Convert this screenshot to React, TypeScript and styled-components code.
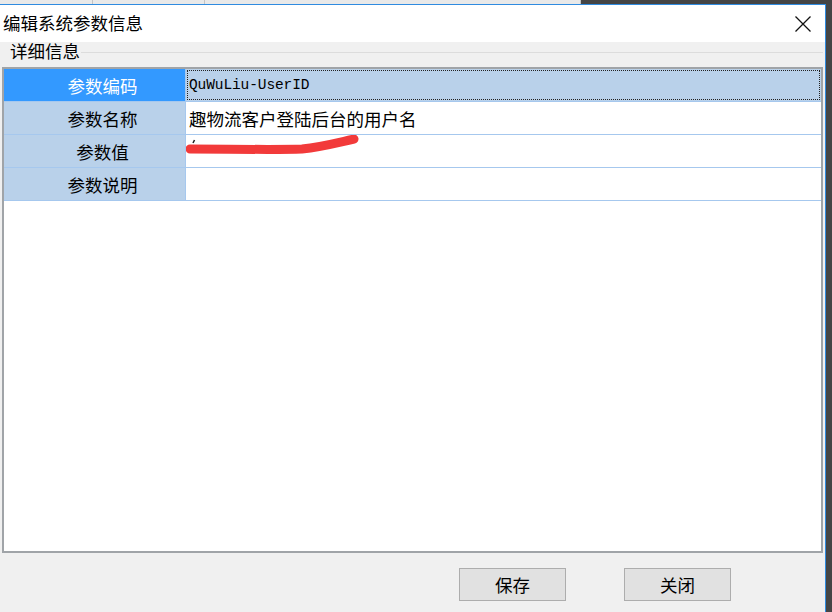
import React from "react";
import styled, { createGlobalStyle } from "styled-components";

const GlobalStyle = createGlobalStyle`
  html, body { margin: 0; padding: 0; background: #454545; }
  body { font-family: "Noto Sans CJK SC", "Noto Sans", sans-serif; }
  * { box-sizing: border-box; }
`;

const Screen = styled.div`
  width: 832px;
  height: 612px;
  overflow: hidden;
  background: #454545;
  display: flex;
  flex-direction: column;
`;

const TaskStrip = styled.div`
  height: 4px;
  display: flex;
  flex: none;
`;

const TaskTab = styled.div<{ $w: number }>`
  width: ${(p) => p.$w}px;
  height: 4px;
  background: #e9e9e9;
  border-right: 1px solid #c4c4c4;
`;

const WindowRow = styled.div`
  flex: 1;
  display: flex;
`;

const Dialog = styled.div`
  width: 826px;
  height: 608px;
  border-top: 1px solid #2f8be0;
  border-right: 1px solid #2f8be0;
  background: #f0f0f0;
  display: flex;
  flex-direction: column;
`;

const TitleBar = styled.div`
  height: 37px;
  flex: none;
  background: #ffffff;
  display: flex;
  align-items: center;
  padding-left: 3px;
`;

const Title = styled.div`
  flex: 1;
  font-size: 17.5px;
  color: #000;
  line-height: 20px;
  margin-top: -1px;
`;

const CloseButton = styled.div`
  width: 44px;
  height: 37px;
  display: flex;
  align-items: center;
  justify-content: center;
`;

const GroupHeader = styled.div`
  height: 25px;
  flex: none;
  display: flex;
  align-items: flex-start;
`;

const GroupInner = styled.div`
  height: 20px;
  flex: 1;
  display: flex;
  align-items: center;
  padding-left: 10px;
  padding-right: 2px;
`;

const GroupLabel = styled.div`
  font-size: 17.5px;
  line-height: 20px;
  color: #000;
  margin-top: -2px;
`;

const GroupLine = styled.div`
  flex: 1;
  height: 1px;
  background: #dcdcdc;
  margin-left: 1px;
  margin-top: 1px;
`;

const Grid = styled.div`
  margin: 0 2px;
  height: 486px;
  flex: none;
  border: 2px solid #a0a4a8;
  background: #ffffff;
  display: flex;
  flex-direction: column;
`;

const Row = styled.div`
  display: grid;
  grid-template-columns: 182px 1fr;
  height: 33px;
  border-bottom: 1px solid #a6c8ee;
`;

const HeaderCell = styled.div<{ $selected?: boolean }>`
  background: ${(p) => (p.$selected ? "#3399ff" : "#b9d1ea")};
  color: ${(p) => (p.$selected ? "#ffffff" : "#000000")};
  border-right: 1px solid #a6c8ee;
  font-size: 17.5px;
  display: flex;
  align-items: center;
  justify-content: center;
  padding-left: 16px;
`;

const ValueCell = styled.div<{ $selected?: boolean }>`
  position: relative;
  background: ${(p) => (p.$selected ? "#b9d1ea" : "#ffffff")};
  display: flex;
  align-items: center;
  padding-left: 3px;
  font-size: 17.5px;
  color: #000;
  outline: ${(p) => (p.$selected ? "1px dotted #222" : "none")};
  outline-offset: -2px;
  margin-right: ${(p) => (p.$selected ? "0" : "0")};
`;

const MonoText = styled.span`
  font-family: "Liberation Mono", "DejaVu Sans Mono", monospace;
  font-size: 14.5px;
  letter-spacing: -0.1px;
`;

const Scribble = styled.svg`
  position: absolute;
  left: 0;
  top: 0;
  pointer-events: none;
`;

const ButtonBar = styled.div`
  flex: 1;
  display: flex;
  justify-content: flex-end;
  align-items: flex-start;
  padding-top: 15px;
  padding-right: 94px;
  gap: 58px;
`;

const Button = styled.button`
  width: 107px;
  height: 33px;
  background: #e1e1e1;
  border: 1px solid #adadad;
  font-family: "Noto Sans CJK SC", sans-serif;
  font-size: 17.5px;
  color: #000;
  padding: 0;
  display: flex;
  align-items: center;
  justify-content: center;
`;

const rows = [
  { label: "参数编码", value: "QuWuLiu-UserID", selected: true, mono: true },
  { label: "参数名称", value: "趣物流客户登陆后台的用户名" },
  { label: "参数值", value: "", scribble: true },
  { label: "参数说明", value: "" },
];

export default function App() {
  return (
    <>
      <GlobalStyle />
      <Screen>
        <TaskStrip>
          <TaskTab $w={93} />
          <TaskTab $w={112} />
          <TaskTab $w={376} />
        </TaskStrip>
        <WindowRow>
          <Dialog>
            <TitleBar>
              <Title>编辑系统参数信息</Title>
              <CloseButton>
                <svg width="16" height="16" viewBox="0 0 16 16">
                  <path d="M0.5 0.5 L15.5 15.5 M15.5 0.5 L0.5 15.5" stroke="#111" strokeWidth="1.3" fill="none" />
                </svg>
              </CloseButton>
            </TitleBar>
            <GroupHeader>
              <GroupInner>
                <GroupLabel>详细信息</GroupLabel>
                <GroupLine />
              </GroupInner>
            </GroupHeader>
            <Grid>
              {rows.map((r) => (
                <Row key={r.label}>
                  <HeaderCell $selected={r.selected}>{r.label}</HeaderCell>
                  <ValueCell $selected={r.selected}>
                    {r.mono ? <MonoText>{r.value}</MonoText> : r.value}
                    {r.scribble && (
                      <Scribble width="180" height="24" viewBox="0 0 180 24">
                        <path d="M7 8 L8.5 5" stroke="#222" strokeWidth="1.5" fill="none" />
                        <path
                          d="M4 14 C40 14, 90 15, 116 14 C135 12, 150 8, 168 4"
                          stroke="#f23a3a"
                          strokeWidth="9"
                          strokeLinecap="round"
                          fill="none"
                        />
                      </Scribble>
                    )}
                  </ValueCell>
                </Row>
              ))}
            </Grid>
            <ButtonBar>
              <Button>保存</Button>
              <Button>关闭</Button>
            </ButtonBar>
          </Dialog>
        </WindowRow>
      </Screen>
    </>
  );
}
